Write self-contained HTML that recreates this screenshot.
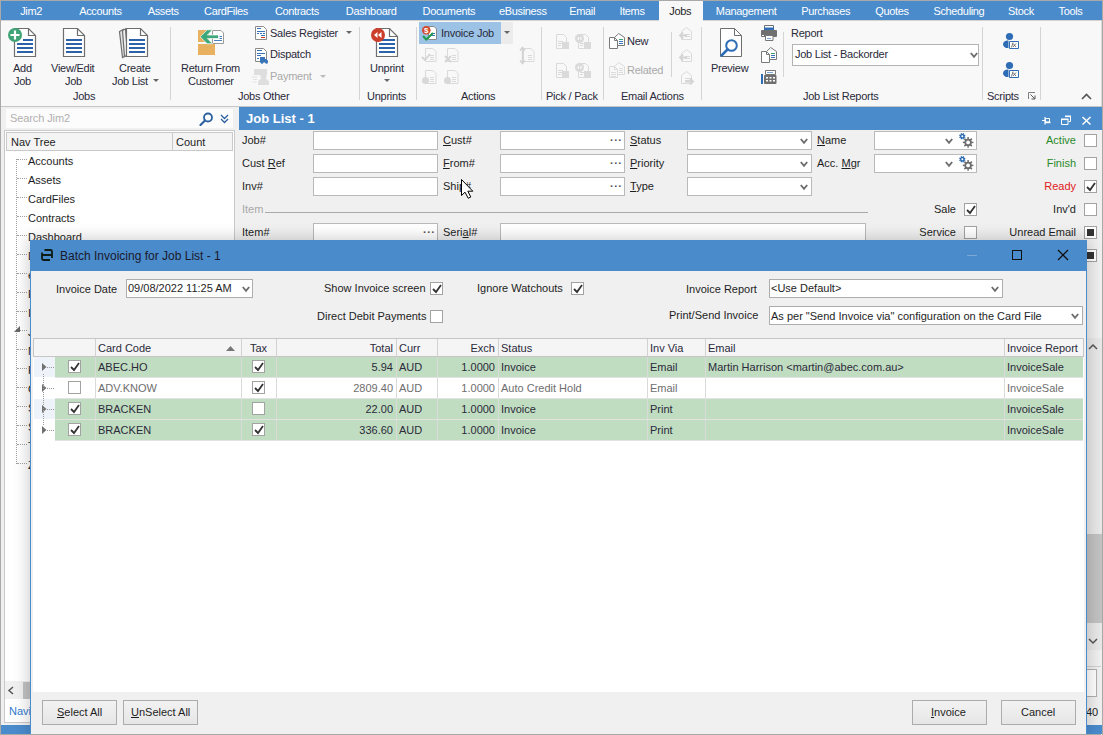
<!DOCTYPE html>
<html><head><meta charset="utf-8">
<style>
*{box-sizing:border-box;margin:0;padding:0}
html,body{width:1103px;height:735px;overflow:hidden;background:#f0f0f0}
body{position:relative;font-family:"Liberation Sans",sans-serif;font-size:11px;color:#1e1e1e}
.a{position:absolute}
.t{position:absolute;white-space:pre;line-height:13px;font-size:11px}
.tab{position:absolute;top:5px;width:80px;text-align:center;color:#fff;white-space:pre;line-height:13px;letter-spacing:-0.35px}
.r{letter-spacing:-0.25px;color:#2a2a3a}
.dis{color:#a9a9a9}
.sep{position:absolute;width:1px;background:#d4d4d4}
.inp{position:absolute;background:#fff;border:1px solid #b9b9b9}
.cb{position:absolute;width:13px;height:13px;background:#fff;border:1px solid #a2a2a2}
.chev{position:absolute;width:5px;height:5px;border-right:2px solid #6a6a6a;border-bottom:2px solid #6a6a6a;transform:translate(0.5px,0.5px) rotate(45deg)}
.dots{position:absolute;font-size:11px;letter-spacing:0px;color:#444;line-height:8px}
.btn{background:linear-gradient(#f2f2f2,#e6e6e6);border:1px solid #acacac}
u{text-decoration:underline;text-underline-offset:1px}
</style></head><body>
<!-- outer frame -->
<div class="a" style="left:0;top:0;width:1103px;height:1px;background:#a9a9a9"></div>
<div class="a" style="left:0;top:0;width:1px;height:735px;background:#a9a9a9"></div>
<div class="a" style="left:1102px;top:0;width:1px;height:735px;background:#a9a9a9"></div>
<!-- tab bar -->
<div class="a" style="left:1px;top:1px;width:1101px;height:19px;background:#4a8bcc"></div>
<div class="a" style="left:1px;top:20px;width:1101px;height:1px;background:#d6d2ce"></div>
<div class="a" style="left:659px;top:1px;width:44px;height:20px;background:#f8f8f8"></div>
<div class="tab" style="left:-8.9px">Jim2</div>
<div class="tab" style="left:60.4px">Accounts</div>
<div class="tab" style="left:123.2px">Assets</div>
<div class="tab" style="left:186.0px">CardFiles</div>
<div class="tab" style="left:256.9px">Contracts</div>
<div class="tab" style="left:331.2px">Dashboard</div>
<div class="tab" style="left:408.8px">Documents</div>
<div class="tab" style="left:482.8px">eBusiness</div>
<div class="tab" style="left:542.2px">Email</div>
<div class="tab" style="left:592.0px">Items</div>
<div class="tab" style="left:640.2px;color:#1e1e1e">Jobs</div>
<div class="tab" style="left:706.2px">Management</div>
<div class="tab" style="left:785.7px">Purchases</div>
<div class="tab" style="left:851.9px">Quotes</div>
<div class="tab" style="left:918.9px">Scheduling</div>
<div class="tab" style="left:981.0px">Stock</div>
<div class="tab" style="left:1030.5px">Tools</div>
<!-- ribbon -->
<div class="a" style="left:1px;top:21px;width:1100px;height:85px;background:#f8f8f8"></div>
<div class="a" style="left:1101px;top:21px;width:1px;height:85px;background:#d8d8d8"></div>
<div class="a" style="left:1px;top:106px;width:1101px;height:1px;background:#c6c6c6"></div>
<!-- Jobs group -->
<svg class="a" style="left:0;top:21px" width="170" height="45" viewBox="0 21 170 45">
 <g fill="#fff" stroke="#6e6e6e" stroke-width="1.2">
  <path d="M14.5 28.5h14l7 7v21h-21z"/>
  <path d="M63.5 28.5h14l7 7v21h-21z"/>
  <path d="M119.5 31.5l4-2 3 26-4 2z" fill="#e6e6e6"/>
  <path d="M122.5 30.5l3-1.5 2 26-3 1.5z" fill="#f2f2f2"/>
  <path d="M126.5 28.5h14l7 7v21h-21z"/>
 </g>
 <g fill="none" stroke="#6e6e6e" stroke-width="1.2"><path d="M28.5 28.5v7h7M77.5 28.5v7h7M140.5 28.5v7h7"/></g>
 <g fill="#2e62a8">
  <rect x="23" y="39" width="10" height="2"/><rect x="17" y="43" width="16" height="2"/><rect x="17" y="47" width="16" height="2"/><rect x="17" y="51" width="16" height="2"/>
  <rect x="66" y="39" width="16" height="2"/><rect x="66" y="43" width="16" height="2"/><rect x="66" y="47" width="16" height="2"/><rect x="66" y="51" width="16" height="2"/>
  <rect x="129" y="39" width="16" height="2"/><rect x="129" y="43" width="16" height="2"/><rect x="129" y="47" width="16" height="2"/><rect x="129" y="51" width="16" height="2"/>
 </g>
 <circle cx="15" cy="35" r="7" fill="#3fa377"/>
 <path d="M15 30.5v9M10.5 35h9" stroke="#fff" stroke-width="2.2"/>
</svg>
<div class="t r" style="left:13px;top:62px">Add</div>
<div class="t r" style="left:14px;top:75px">Job</div>
<div class="t r" style="left:51px;top:62px">View/Edit</div>
<div class="t r" style="left:65px;top:75px">Job</div>
<div class="t r" style="left:119px;top:62px">Create</div>
<div class="t r" style="left:112px;top:75px">Job List</div>
<svg class="a" style="left:153px;top:79px" width="7" height="4"><path d="M0 0h6l-3 3z" fill="#666"/></svg>
<div class="t r" style="left:73px;top:90px">Jobs</div>
<div class="sep" style="left:170px;top:27px;height:73px"></div>
<!-- Jobs Other -->
<svg class="a" style="left:196px;top:28px" width="30" height="30">
 <rect x="2" y="2" width="11" height="12" fill="#e8b15f"/>
 <rect x="2" y="16" width="17" height="11" fill="#e8b15f"/>
 <path d="M16.5 2.5h8.5l2.5 2.5v10.5h-11z" fill="#fff" stroke="#9a9a9a" stroke-width="1"/>
 <path d="M23.5 8.5h2.5M23.5 10.5h2.5M18 12.5h8" stroke="#4a7fc0"/>
 <path d="M4.2 8.8L11.2 1.8H16.6L11.4 7H22.5V10.6H11.4L16.6 15.8H11.2Z" fill="#3ea87b" stroke="#fff" stroke-width="0.7"/>
</svg>
<div class="t r" style="left:181px;top:62px">Return From</div>
<div class="t r" style="left:188px;top:75px">Customer</div>
<svg class="a" style="left:250px;top:22px" width="22" height="66" viewBox="250 22 22 66">
 <path d="M255.5 26.5h8l3 3v10h-11z" fill="#fff" stroke="#8a8a8a"/>
 <path d="M257 28.5h4M257 31.5h8M257 33.5h2M260 33.5h2M263 33.5h2M261 35.5h4" stroke="#3a74b8"/>
 <path d="M261 37.5h4" stroke="#d03a20"/>
 <path d="M255.5 48.5h8l3 3v10h-11z" fill="#fff" stroke="#8a8a8a"/>
 <path d="M257 50.5h5M257 53.5h8M257 55.5h4M257 58.5h2" stroke="#3a74b8"/>
 <path d="M260 57h5v2h1.5l1.5 2v1.5h-8z" fill="#3a74b8"/>
 <circle cx="262" cy="62.5" r="1.3" fill="#3a74b8"/><circle cx="266.5" cy="62.5" r="1.3" fill="#3a74b8"/>
 <g fill="#dedede"><rect x="254" y="69" width="13" height="6"/><circle cx="263.5" cy="76.5" r="3"/><path d="M258 85v-2.5a5.5 4 0 0 1 11 0v2.5z"/></g>
 <path d="M252 77h5M253 79.5h4M252.5 82h4" stroke="#e2e2e2"/>
</svg>
<div class="t r" style="left:270px;top:27px">Sales Register</div>
<svg class="a" style="left:346px;top:31px" width="7" height="4"><path d="M0 0h6l-3 3z" fill="#666"/></svg>
<div class="t r" style="left:270px;top:48px">Dispatch</div>
<div class="t r dis" style="left:270px;top:70px">Payment</div>
<svg class="a" style="left:320px;top:75px" width="7" height="4"><path d="M0 0h6l-3 3z" fill="#bbb"/></svg>
<div class="t r" style="left:238px;top:90px">Jobs Other</div>
<div class="sep" style="left:359px;top:27px;height:73px"></div>
<!-- Unprints -->
<svg class="a" style="left:368px;top:26px" width="32" height="32">
 <path d="M8.5 2.5h13l8 8v20h-21z" fill="#fff" stroke="#6e6e6e" stroke-width="1.2"/>
 <path d="M21.5 2.5v8h8" fill="none" stroke="#6e6e6e" stroke-width="1.2"/>
 <g fill="#2c64ac"><rect x="11" y="13" width="16" height="2"/><rect x="11" y="17" width="16" height="2"/><rect x="11" y="21" width="16" height="2"/><rect x="11" y="25" width="16" height="2"/></g>
 <circle cx="10" cy="9" r="7" fill="#cc3f2c"/>
 <path d="M6 9l3.5-3v6zM10 9l3.5-3v6z" fill="#fff"/>
</svg>
<div class="t r" style="left:370px;top:62px">Unprint</div>
<svg class="a" style="left:384px;top:79px" width="7" height="4"><path d="M0 0h6l-3 3z" fill="#666"/></svg>
<div class="t r" style="left:367px;top:90px">Unprints</div>
<div class="sep" style="left:416px;top:27px;height:73px"></div>
<!-- Actions -->
<div class="a" style="left:419px;top:22px;width:82px;height:22px;background:#9cc3e6"></div>
<div class="a" style="left:501px;top:22px;width:12px;height:22px;background:#ececec"></div>
<svg class="a" style="left:418px;top:22px" width="22" height="22" viewBox="418 22 22 22">
 <path d="M428.5 26.5h5.5l2.5 2.5v10.5h-8z" fill="#fff" stroke="#8a8a8a"/>
 <path d="M431 33.5h4M431 35.5h4" stroke="#3a74b8"/>
 <circle cx="426.3" cy="30.2" r="4.3" fill="#d4472a"/>
 <text x="426.3" y="33.3" font-size="8" font-weight="bold" fill="#fff" text-anchor="middle" font-family="Liberation Sans">$</text>
 <path d="M423 36l3.3 3.5 6.7-6.5" fill="none" stroke="#1e9a4a" stroke-width="2"/>
</svg>
<div class="t r" style="left:441px;top:27px">Invoice Job</div>
<svg class="a" style="left:504px;top:31px" width="7" height="4"><path d="M0 0h6l-3 3z" fill="#666"/></svg>
<svg class="a" style="left:418px;top:44px" width="120" height="44" viewBox="418 44 120 44"><path d="M425.5 48.5h7.5l3 3v10h-10.5z" fill="none" stroke="#dadada"/><path d="M430 55.5h4M430 57.5h4M430 59.5h4" stroke="#dadada"/><path d="M447.5 48.5h7.5l3 3v10h-10.5z" fill="none" stroke="#dadada"/><path d="M452 55.5h4M452 57.5h4M452 59.5h4" stroke="#dadada"/><path d="M523.5 48.5h7.5l3 3v10h-10.5z" fill="none" stroke="#dadada"/><path d="M528 55.5h4M528 57.5h4M528 59.5h4" stroke="#dadada"/><path d="M425.5 70.5h7.5l3 3v10h-10.5z" fill="none" stroke="#dadada"/><path d="M430 77.5h4M430 79.5h4M430 81.5h4" stroke="#dadada"/><path d="M447.5 70.5h7.5l3 3v10h-10.5z" fill="none" stroke="#dadada"/><path d="M452 77.5h4M452 79.5h4M452 81.5h4" stroke="#dadada"/><path d="M422 57l3 3 5-6" fill="none" stroke="#d4d4d4" stroke-width="1.8"/>
<path d="M445 56l6 6M451 56l-6 6" stroke="#d4d4d4" stroke-width="1.8"/>
<path d="M522.5 48v15M520 50.5l2.5-3 2.5 3M520 60.5l2.5 3 2.5-3" fill="none" stroke="#d4d4d4" stroke-width="1.5"/>
<circle cx="425.5" cy="80.5" r="3.5" fill="#d8d8d8"/><circle cx="447.5" cy="80.5" r="3.5" fill="#d8d8d8"/></svg>
<div class="t r" style="left:461px;top:90px">Actions</div>
<div class="sep" style="left:541px;top:27px;height:73px"></div>
<!-- Pick/Pack -->
<svg class="a" style="left:550px;top:30px" width="45" height="52" viewBox="550 30 45 52"><path d="M556.5 34.5h7l3 3v11h-10z" fill="none" stroke="#dadada"/><path d="M558 41.5h5M558 43.5h4M558 45.5h3" stroke="#dadada"/><rect x="562" y="42" width="7" height="7" fill="#dadada"/>
<path d="M578.5 34.5h7l3 3v11h-10z" fill="none" stroke="#dadada"/><path d="M580 43.5h4M580 45.5h3" stroke="#dadada"/><rect x="584" y="42" width="7" height="7" fill="#dadada"/>
<circle cx="579.5" cy="38.5" r="4.5" fill="#dadada"/><path d="M577 38.5l2-2v4zM579.5 38.5l2-2v4z" fill="#f8f8f8"/><path d="M556.5 63.5h7l3 3v11h-10z" fill="none" stroke="#dadada"/><path d="M558 70.5h5M558 72.5h4M558 74.5h3" stroke="#dadada"/><rect x="562" y="71" width="7" height="7" fill="#dadada"/>
<path d="M578.5 63.5h7l3 3v11h-10z" fill="none" stroke="#dadada"/><path d="M580 72.5h4M580 74.5h3" stroke="#dadada"/><rect x="584" y="71" width="7" height="7" fill="#dadada"/>
<circle cx="579.5" cy="67.5" r="4.5" fill="#dadada"/><path d="M577 67.5l2-2v4zM579.5 67.5l2-2v4z" fill="#f8f8f8"/></svg>
<div class="t r" style="left:546px;top:90px">Pick / Pack</div>
<div class="sep" style="left:603px;top:27px;height:73px"></div>
<!-- Email Actions -->
<svg class="a" style="left:606px;top:30px" width="22" height="52" viewBox="606 30 22 52"><path d="M614.5 37.5L618.7 33.5L624.5 37.5V45.5H614.5Z" fill="#fff" stroke="#7a7a7a"/><path d="M609.5 37.5H614.5L617.5 40.5V48.5H609.5Z" fill="#fff" stroke="#7a7a7a"/><path d="M614.5 37.5V40.5H617.5" fill="none" stroke="#7a7a7a"/><path d="M619 39.5h4" stroke="#3aa070"/><path d="M619 41.5h4M619 43.5h4" stroke="#3a74b8"/><path d="M614.5 66.5L618.7 62.5L624.5 66.5V74.5H614.5Z" fill="#f8f8f8" stroke="#dcdcdc"/><path d="M609.5 66.5H614.5L617.5 69.5V77.5H609.5Z" fill="#f8f8f8" stroke="#dcdcdc"/><path d="M614.5 66.5V69.5H617.5" fill="none" stroke="#dcdcdc"/><path d="M619 68.5h4M619 70.5h4M619 72.5h4M611 72.5h5M611 74.5h5M611 76.5h5" stroke="#dcdcdc"/></svg>
<div class="t r" style="left:627px;top:35px">New</div>
<div class="t r dis" style="left:627px;top:64px">Related</div>
<div class="sep" style="left:671px;top:32px;height:45px"></div>
<svg class="a" style="left:676px;top:24px" width="20" height="64" viewBox="676 24 20 64"><path d="M681.5 31.5l5-4 5 4v8h-10z" fill="#f8f8f8" stroke="#dadada"/><path d="M685 34.5h5M685 36.5h5" stroke="#dadada"/><path d="M680 35.5h7M683 32.5l-3 3 3 3" fill="none" stroke="#d4d4d4" stroke-width="1.8"/><path d="M681.5 53.5l5-4 5 4v8h-10z" fill="#f8f8f8" stroke="#dadada"/><path d="M685 56.5h5M685 58.5h5" stroke="#dadada"/><path d="M680 57.5h7M683 54.5l-3 3 3 3" fill="none" stroke="#d4d4d4" stroke-width="1.8"/><path d="M681.5 75.5l5-4 5 4v8h-10z" fill="#f8f8f8" stroke="#dadada"/><path d="M685 78.5h5M685 80.5h5" stroke="#dadada"/><path d="M685 81.5h8M690 78.5l3 3-3 3" fill="none" stroke="#d4d4d4" stroke-width="1.8"/></svg>
<div class="t r" style="left:621px;top:90px">Email Actions</div>
<div class="sep" style="left:701px;top:27px;height:73px"></div>
<!-- Job List Reports -->
<svg class="a" style="left:710px;top:24px" width="36" height="36" viewBox="710 24 36 36">
 <path d="M720.5 28.5H734.5L741.5 35.5V56.5H720.5Z" fill="#fff" stroke="#6e6e6e" stroke-width="1"/>
 <path d="M734.5 28.5V35.5H741.5" fill="none" stroke="#6e6e6e" stroke-width="1"/>
 <circle cx="731.5" cy="45.5" r="5.3" fill="#fff" stroke="#2e6db5" stroke-width="2"/>
 <path d="M727.5 49.5l-6 6" stroke="#2e6db5" stroke-width="2.6" stroke-linecap="round"/>
</svg>
<div class="t r" style="left:711px;top:62px">Preview</div>
<svg class="a" style="left:758px;top:22px" width="22" height="66" viewBox="758 22 22 66">
 <path d="M764.5 25.5h9v6h-9z" fill="#fff" stroke="#6e6e6e"/>
 <rect x="764" y="27.5" width="10" height="4" fill="#2e6db5"/>
 <rect x="761" y="30" width="16" height="7" rx="1" fill="#707070"/>
 <rect x="762" y="35" width="2" height="1" fill="#fff"/>
 <path d="M765.5 35.5h7.5v5h-7.5z" fill="#fff" stroke="#777"/>
 <path d="M767 38.5h4" stroke="#7aa3d6"/>
 <g transform="translate(152 14)"><path d="M614.5 37.5L618.7 33.5L624.5 37.5V45.5H614.5Z" fill="#fff" stroke="#7a7a7a"/><path d="M609.5 37.5H614.5L617.5 40.5V48.5H609.5Z" fill="#fff" stroke="#7a7a7a"/><path d="M614.5 37.5V40.5H617.5" fill="none" stroke="#7a7a7a"/><path d="M619 39.5h4" stroke="#3aa070"/><path d="M619 41.5h4M619 43.5h4" stroke="#3a74b8"/></g>
 <rect x="761" y="74" width="2" height="10" fill="#2e6db5"/>
 <path d="M765.5 70.5h10v4h-10z" fill="#fff" stroke="#777"/>
 <path d="M767 72.5h6" stroke="#7aa3d6"/>
 <rect x="764" y="75" width="12.5" height="9" rx="1" fill="#707070"/>
 <g fill="#fff"><rect x="766" y="77" width="2" height="1.5"/><rect x="769.5" y="77" width="2" height="1.5"/><rect x="773" y="77" width="2" height="1.5"/><rect x="766" y="80" width="2" height="1.5"/><rect x="769.5" y="80" width="2" height="1.5"/><rect x="773" y="80" width="2" height="1.5"/></g>
</svg>
<div class="sep" style="left:783px;top:32px;height:45px"></div>
<div class="t r" style="left:791px;top:27px">Report</div>
<div class="inp" style="left:792px;top:44px;width:187px;height:22px;border-color:#b4b4b4"></div>
<div class="t r" style="left:795px;top:48px">Job List - Backorder</div>

<svg class="a" style="left:970px;top:52px" width="8" height="7"><path d="M0.8 1L4 4.8L7.2 1" fill="none" stroke="#6e6e6e" stroke-width="1.9"/></svg>
<div class="t r" style="left:803px;top:90px">Job List Reports</div>
<div class="sep" style="left:982px;top:27px;height:73px"></div>
<!-- Scripts -->
<svg class="a" style="left:1000px;top:30px" width="22" height="52" viewBox="1000 30 22 52"><circle cx="1009.5" cy="36.5" r="3.6" fill="#2e6db5"/>
 <path d="M1008.5 40.5v7.5a4.5 4 0 0 1 -5.5 -3.75a4.5 4 0 0 1 5.5 -3.75z" fill="#2e6db5"/>
 <path d="M1009.5 41.5h9v7h-9z" fill="#fff" stroke="#2e6db5"/>
 <path d="M1011.5 47.5l1.5-5M1013 43.5l3 3.5M1016 43.5l-3 3.5" fill="none" stroke="#555" stroke-width="0.8"/><circle cx="1009.5" cy="65.5" r="3.6" fill="#2e6db5"/>
 <path d="M1008.5 69.5v7.5a4.5 4 0 0 1 -5.5 -3.75a4.5 4 0 0 1 5.5 -3.75z" fill="#2e6db5"/>
 <path d="M1009.5 70.5h9v7h-9z" fill="#fff" stroke="#2e6db5"/>
 <path d="M1011.5 76.5l1.5-5M1013 72.5l3 3.5M1016 72.5l-3 3.5" fill="none" stroke="#555" stroke-width="0.8"/></svg>
<div class="t r" style="left:987px;top:90px">Scripts</div>
<svg class="a" style="left:1027px;top:91px" width="10" height="10" viewBox="1027 91 10 10">
 <path d="M1028.5 99V92.5H1035" stroke="#808080" fill="none"/><path d="M1030.5 94.5l4 4M1035 95.5v3.5h-3.5" stroke="#555" fill="none"/>
</svg>
<div class="sep" style="left:1040px;top:27px;height:73px"></div>
<svg class="a" style="left:1081px;top:93px" width="11" height="7"><path d="M1 6l4.5-4.5 4.5 4.5" fill="none" stroke="#555" stroke-width="1.6"/></svg>
<!-- left nav panel -->
<div class="a" style="left:6px;top:109px;width:227px;height:19px;background:#fcfcfc"></div>
<div class="t" style="left:10px;top:112px;color:#b0b0b0;letter-spacing:-0.1px">Search Jim2</div>
<svg class="a" style="left:199px;top:112px" width="15" height="14">
 <circle cx="9" cy="5.5" r="4" fill="none" stroke="#2a5fa0" stroke-width="1.8"/>
 <path d="M6 8.5l-4.5 4.5" stroke="#2a5fa0" stroke-width="2.2" stroke-linecap="round"/>
</svg>
<svg class="a" style="left:220px;top:114px" width="9" height="10"><path d="M1 1l3.5 3.5 3.5-3.5M1 5l3.5 3.5 3.5-3.5" fill="none" stroke="#2a5fa0" stroke-width="1.3"/></svg>
<div class="a" style="left:4px;top:130px;width:231px;height:593px;background:#fff;border:1px solid #c9c9c9"></div>
<div class="a" style="left:6px;top:132px;width:227px;height:19px;background:#f4f4f4;border:1px solid #c9c9c9"></div>
<div class="a" style="left:172px;top:133px;width:1px;height:17px;background:#c9c9c9"></div>
<div class="t" style="left:11px;top:136px">Nav Tree</div>
<div class="t" style="left:176px;top:136px">Count</div>
<div class="a" style="left:16px;top:159px;width:1px;height:305px;border-left:1px dotted #a0a0a0"></div>
<div class="a" style="left:17px;top:159px;width:10px;height:1px;border-top:1px dotted #a0a0a0"></div>
<div class="t" style="left:28px;top:155px">Accounts</div>
<div class="a" style="left:17px;top:178px;width:10px;height:1px;border-top:1px dotted #a0a0a0"></div>
<div class="t" style="left:28px;top:174px">Assets</div>
<div class="a" style="left:17px;top:197px;width:10px;height:1px;border-top:1px dotted #a0a0a0"></div>
<div class="t" style="left:28px;top:193px">CardFiles</div>
<div class="a" style="left:17px;top:216px;width:10px;height:1px;border-top:1px dotted #a0a0a0"></div>
<div class="t" style="left:28px;top:212px">Contracts</div>
<div class="a" style="left:17px;top:235px;width:10px;height:1px;border-top:1px dotted #a0a0a0"></div>
<div class="t" style="left:28px;top:231px">Dashboard</div>
<div class="a" style="left:17px;top:254px;width:10px;height:1px;border-top:1px dotted #a0a0a0"></div>
<div class="t" style="left:28px;top:250px">Documents</div>
<div class="a" style="left:17px;top:273px;width:10px;height:1px;border-top:1px dotted #a0a0a0"></div>
<div class="t" style="left:28px;top:269px">eBusiness</div>
<div class="a" style="left:17px;top:292px;width:10px;height:1px;border-top:1px dotted #a0a0a0"></div>
<div class="t" style="left:28px;top:288px">Email</div>
<div class="a" style="left:17px;top:311px;width:10px;height:1px;border-top:1px dotted #a0a0a0"></div>
<div class="t" style="left:28px;top:307px">Items</div>
<div class="a" style="left:17px;top:330px;width:10px;height:1px;border-top:1px dotted #a0a0a0"></div>
<div class="t" style="left:28px;top:326px">Jobs</div>
<div class="a" style="left:17px;top:349px;width:10px;height:1px;border-top:1px dotted #a0a0a0"></div>
<div class="t" style="left:28px;top:345px">Management</div>
<div class="a" style="left:17px;top:368px;width:10px;height:1px;border-top:1px dotted #a0a0a0"></div>
<div class="t" style="left:28px;top:364px">Purchases</div>
<div class="a" style="left:17px;top:387px;width:10px;height:1px;border-top:1px dotted #a0a0a0"></div>
<div class="t" style="left:28px;top:383px">Quotes</div>
<div class="a" style="left:17px;top:406px;width:10px;height:1px;border-top:1px dotted #a0a0a0"></div>
<div class="t" style="left:28px;top:402px">Scheduling</div>
<div class="a" style="left:17px;top:425px;width:10px;height:1px;border-top:1px dotted #a0a0a0"></div>
<div class="t" style="left:28px;top:421px">Stock</div>
<div class="a" style="left:17px;top:444px;width:10px;height:1px;border-top:1px dotted #a0a0a0"></div>
<div class="t" style="left:28px;top:440px">Tools</div>
<div class="a" style="left:17px;top:463px;width:10px;height:1px;border-top:1px dotted #a0a0a0"></div>
<div class="t" style="left:28px;top:459px">Zzz</div>
<svg class="a" style="left:14px;top:326px" width="7" height="7"><path d="M6 0v6h-6z" fill="#666"/></svg>
<div class="a" style="left:5px;top:681px;width:229px;height:18px;background:#f0f0f0"></div>
<svg class="a" style="left:7px;top:686px" width="8" height="9"><path d="M6 1l-4 3.5 4 3.5" fill="none" stroke="#555" stroke-width="1.5"/></svg>
<div class="a" style="left:23px;top:682px;width:100px;height:17px;background:#c2c2c2"></div>
<div class="t" style="left:9px;top:705px;color:#2f7ad0">Navigator</div>
<div class="a" style="left:1px;top:725px;width:236px;height:10px;background:#4a8bcc"></div>

<!-- job list panel -->
<div class="a" style="left:239px;top:107px;width:863px;height:23px;background:#4a8bcc"></div>
<div class="t" style="left:246px;top:111px;font-size:13px;line-height:15px;font-weight:bold;color:#fff">Job List - 1</div>
<svg class="a" style="left:1038px;top:112px" width="56" height="16" viewBox="1038 112 56 16">
 <path d="M1042 120.5h3M1045 117v7.5" stroke="#fff" stroke-width="1.2"/>
 <path d="M1045.5 118.5h4v3.5h-4z" fill="none" stroke="#fff" stroke-width="1"/><path d="M1045 122.5h5.5" stroke="#fff" stroke-width="1.4"/>
 <path d="M1065.5 116.5h5v5h-2" fill="none" stroke="#fff" stroke-width="1"/><path d="M1065 116.3h6" stroke="#fff" stroke-width="1.6"/>
 <path d="M1061.5 119.5h6.5v5h-6.5z" fill="none" stroke="#fff" stroke-width="1"/><path d="M1061 119.3h7.5" stroke="#fff" stroke-width="1.6"/>
 <path d="M1082.5 117l8 7.5M1090.5 117l-8 7.5" stroke="#fff" stroke-width="1.5"/>
</svg>
<div class="t" style="left:242px;top:134px">Job#</div>
<div class="t" style="left:242px;top:157px">Cust <u>R</u>ef</div>
<div class="t" style="left:242px;top:180px">Inv#</div>
<div class="t" style="left:242px;top:203px;color:#a8a8a8">Item</div>
<div class="a" style="left:265px;top:212px;width:603px;height:1px;background:#a9a9a9"></div>
<div class="t" style="left:242px;top:226px">Item#</div>
<div class="inp" style="left:313px;top:131px;width:125px;height:19px"></div>
<div class="inp" style="left:313px;top:154px;width:125px;height:19px"></div>
<div class="inp" style="left:313px;top:177px;width:125px;height:19px"></div>
<div class="inp" style="left:313px;top:223px;width:125px;height:19px"></div>
<div class="t" style="left:443px;top:134px"><u>C</u>ust#</div>
<div class="t" style="left:443px;top:157px"><u>F</u>rom#</div>
<div class="t" style="left:443px;top:180px">Ship#</div>
<div class="t" style="left:443px;top:226px">Seri<u>a</u>l#</div>
<div class="inp" style="left:500px;top:131px;width:125px;height:19px"></div>
<div class="inp" style="left:500px;top:154px;width:125px;height:19px"></div>
<div class="inp" style="left:500px;top:177px;width:125px;height:19px"></div>
<div class="inp" style="left:500px;top:223px;width:366px;height:19px"></div>
<div class="t" style="left:610px;top:134px;letter-spacing:0.5px;font-weight:bold;color:#555">···</div>
<div class="t" style="left:610px;top:157px;letter-spacing:0.5px;font-weight:bold;color:#555">···</div>
<div class="t" style="left:610px;top:180px;letter-spacing:0.5px;font-weight:bold;color:#555">···</div>
<div class="t" style="left:423px;top:226px;letter-spacing:0.5px;font-weight:bold;color:#555">···</div>
<div class="t" style="left:630px;top:134px"><u>S</u>tatus</div>
<div class="t" style="left:630px;top:157px"><u>P</u>riority</div>
<div class="t" style="left:630px;top:180px"><u>T</u>ype</div>
<div class="inp" style="left:687px;top:131px;width:125px;height:19px"></div>
<div class="inp" style="left:687px;top:154px;width:125px;height:19px"></div>
<div class="inp" style="left:687px;top:177px;width:125px;height:19px"></div>



<svg class="a" style="left:800px;top:138px" width="8" height="7"><path d="M0.8 1L4 4.8L7.2 1" fill="none" stroke="#6e6e6e" stroke-width="1.9"/></svg><svg class="a" style="left:800px;top:161px" width="8" height="7"><path d="M0.8 1L4 4.8L7.2 1" fill="none" stroke="#6e6e6e" stroke-width="1.9"/></svg><svg class="a" style="left:800px;top:184px" width="8" height="7"><path d="M0.8 1L4 4.8L7.2 1" fill="none" stroke="#6e6e6e" stroke-width="1.9"/></svg>
<div class="t" style="left:817px;top:134px"><u>N</u>ame</div>
<div class="t" style="left:817px;top:157px">Acc. <u>M</u>gr</div>
<div class="inp" style="left:874px;top:131px;width:103px;height:19px"></div>
<div class="inp" style="left:874px;top:154px;width:103px;height:19px"></div>
<svg class="a" style="left:945px;top:138px" width="8" height="7"><path d="M0.8 1L4 4.8L7.2 1" fill="none" stroke="#6e6e6e" stroke-width="1.9"/></svg><svg class="a" style="left:945px;top:161px" width="8" height="7"><path d="M0.8 1L4 4.8L7.2 1" fill="none" stroke="#6e6e6e" stroke-width="1.9"/></svg>


<svg class="a" style="left:956px;top:130px" width="20" height="42" viewBox="956 130 20 42"><path d="M962.80 142.40L973.40 142.40" stroke="#6e6e6e" stroke-width="1.5"/><path d="M964.35 138.65L971.85 146.15" stroke="#6e6e6e" stroke-width="1.5"/><path d="M968.10 137.10L968.10 147.70" stroke="#6e6e6e" stroke-width="1.5"/><path d="M971.85 138.65L964.35 146.15" stroke="#6e6e6e" stroke-width="1.5"/><circle cx="968.1" cy="142.4" r="3.7" fill="#6e6e6e"/><circle cx="968.1" cy="142.4" r="1.9" fill="#fff"/><path d="M959.34 135.08L965.26 137.52" stroke="#2e6db5" stroke-width="1.3"/><path d="M961.08 133.34L963.52 139.26" stroke="#2e6db5" stroke-width="1.3"/><path d="M963.52 133.34L961.08 139.26" stroke="#2e6db5" stroke-width="1.3"/><path d="M965.26 135.08L959.34 137.52" stroke="#2e6db5" stroke-width="1.3"/><circle cx="962.3" cy="136.3" r="2.3" fill="#2e6db5"/><circle cx="962.3" cy="136.3" r="1.0" fill="#fff"/><path d="M962.80 165.40L973.40 165.40" stroke="#6e6e6e" stroke-width="1.5"/><path d="M964.35 161.65L971.85 169.15" stroke="#6e6e6e" stroke-width="1.5"/><path d="M968.10 160.10L968.10 170.70" stroke="#6e6e6e" stroke-width="1.5"/><path d="M971.85 161.65L964.35 169.15" stroke="#6e6e6e" stroke-width="1.5"/><circle cx="968.1" cy="165.4" r="3.7" fill="#6e6e6e"/><circle cx="968.1" cy="165.4" r="1.9" fill="#fff"/><path d="M959.34 158.08L965.26 160.52" stroke="#2e6db5" stroke-width="1.3"/><path d="M961.08 156.34L963.52 162.26" stroke="#2e6db5" stroke-width="1.3"/><path d="M963.52 156.34L961.08 162.26" stroke="#2e6db5" stroke-width="1.3"/><path d="M965.26 158.08L959.34 160.52" stroke="#2e6db5" stroke-width="1.3"/><circle cx="962.3" cy="159.3" r="2.3" fill="#2e6db5"/><circle cx="962.3" cy="159.3" r="1.0" fill="#fff"/></svg>
<div class="t" style="left:976px;width:100px;text-align:right;top:134px;color:#2a8a2a">Active</div>
<div class="t" style="left:976px;width:100px;text-align:right;top:157px;color:#2a8a2a">Finish</div>
<div class="t" style="left:976px;width:100px;text-align:right;top:180px;color:#e02020">Ready</div>
<div class="t" style="left:976px;width:100px;text-align:right;top:203px">Inv'd</div>
<div class="t" style="left:976px;width:100px;text-align:right;top:226px">Unread Email</div>
<div class="cb" style="left:1084px;top:134px"></div>
<div class="cb" style="left:1084px;top:157px"></div>
<div class="cb" style="left:1084px;top:180px"></div>
<svg class="a" style="left:1086px;top:182px" width="10" height="10"><path d="M1 5l3 3 5-7" fill="none" stroke="#333" stroke-width="1.8"/></svg>
<div class="cb" style="left:1084px;top:203px"></div>
<div class="cb" style="left:1084px;top:226px"></div>
<div class="a" style="left:1087px;top:229px;width:7px;height:7px;background:#333"></div>
<div class="cb" style="left:1084px;top:249px"></div>
<div class="a" style="left:1087px;top:252px;width:7px;height:7px;background:#333"></div>
<div class="t" style="left:856px;width:100px;text-align:right;top:203px">Sale</div>
<div class="t" style="left:856px;width:100px;text-align:right;top:226px">Service</div>
<div class="cb" style="left:964px;top:203px"></div>
<svg class="a" style="left:966px;top:205px" width="10" height="10"><path d="M1 5l3 3 5-7" fill="none" stroke="#333" stroke-width="1.8"/></svg>
<div class="cb" style="left:964px;top:226px"></div>

<!-- cursor -->
<svg class="a" style="left:455px;top:174px" width="24" height="28" viewBox="455 174 24 28">
 <path d="M461.5 179.5V195.5L465 192.2L468.2 198.2L470.8 197L467.8 191.2H472.8Z" fill="#fff" stroke="#000" stroke-width="1" stroke-linejoin="round"/>
</svg>
<!-- right side behind dialog -->
<div class="a" style="left:1087px;top:338px;width:15px;height:312px;background:#e8e8e8"></div>
<div class="a" style="left:1087px;top:534px;width:15px;height:89px;background:#c2c2c2"></div>
<svg class="a" style="left:1088px;top:343px" width="10" height="8"><path d="M1 6l4-4 4 4" fill="none" stroke="#555" stroke-width="1.5"/></svg>
<svg class="a" style="left:1088px;top:637px" width="10" height="8"><path d="M1 2l4 4 4-4" fill="none" stroke="#555" stroke-width="1.5"/></svg>
<div class="a" style="left:1087px;top:666px;width:14px;height:1px;background:#d0d0d0"></div>
<div class="a" style="left:1087px;top:669px;width:10px;height:28px;border:1px solid #b0b0b0;border-left:none;background:#fff"></div>
<div class="t" style="left:1086px;top:706px">40</div>
<div class="a" style="left:1087px;top:725px;width:15px;height:9px;background:#4a8bcc"></div>

<!-- dialog -->
<div class="a" style="left:30px;top:240px;width:1057px;height:494px;background:#4a8bcc;box-shadow:0 0 14px 2px rgba(0,0,0,0.19)"></div>
<div class="a" style="left:31px;top:271px;width:1055px;height:463px;background:#f0f0f0"></div>
<svg class="a" style="left:40px;top:248px" width="14" height="14">
 <path d="M4.5 2H10.5Q12 2 12 3.5V10M2 7H12M2 4.5V10.5Q2 12 3.5 12H10" fill="none" stroke="#0e1a14" stroke-width="1.8"/>
</svg>
<div class="t" style="left:60px;top:249px;font-size:12px;line-height:15px;color:#1a1a2a">Batch Invoicing for Job List - 1</div>
<div class="a" style="left:967px;top:255px;width:10px;height:1px;background:#7ea7d2"></div>
<div class="a" style="left:1012px;top:250px;width:10px;height:10px;border:1.5px solid #111"></div>
<svg class="a" style="left:1057px;top:249px" width="12" height="12"><path d="M1 1l10 10M11 1l-10 10" stroke="#111" stroke-width="1.3"/></svg>
<!-- options -->
<div class="t" style="left:56px;top:283px">Invoice Date</div>
<div class="inp" style="left:126px;top:279px;width:127px;height:19px;border-color:#adadad"></div>
<div class="t" style="left:128px;top:282px">09/08/2022 11:25 AM</div>

<div class="t" style="left:324px;top:282px">Show Invoice screen</div>
<div class="cb" style="left:430px;top:282px"></div>
<svg class="a" style="left:432px;top:284px" width="10" height="10"><path d="M1 5l3 3 5-7" fill="none" stroke="#333" stroke-width="1.8"/></svg>
<div class="t" style="left:317px;top:310px">Direct Debit Payments</div>
<div class="cb" style="left:430px;top:310px"></div>
<div class="t" style="left:477px;top:282px">Ignore Watchouts</div>
<div class="cb" style="left:571px;top:282px"></div>
<svg class="a" style="left:573px;top:284px" width="10" height="10"><path d="M1 5l3 3 5-7" fill="none" stroke="#333" stroke-width="1.8"/></svg>
<div class="t" style="left:686px;top:283px">Invoice Report</div>
<div class="t" style="left:669px;top:309px">Print/Send Invoice</div>
<div class="inp" style="left:769px;top:279px;width:234px;height:19px;border-color:#adadad"></div>
<div class="t" style="left:771px;top:282px">&lt;Use Default&gt;</div>

<div class="inp" style="left:769px;top:306px;width:314px;height:19px;border-color:#adadad"></div>
<div class="t" style="left:771px;top:310px">As per "Send Invoice via" configuration on the Card File</div>

<svg class="a" style="left:242px;top:286px" width="8" height="7"><path d="M0.8 1L4 4.8L7.2 1" fill="none" stroke="#6e6e6e" stroke-width="1.9"/></svg><svg class="a" style="left:991px;top:286px" width="8" height="7"><path d="M0.8 1L4 4.8L7.2 1" fill="none" stroke="#6e6e6e" stroke-width="1.9"/></svg><svg class="a" style="left:1071px;top:313px" width="8" height="7"><path d="M0.8 1L4 4.8L7.2 1" fill="none" stroke="#6e6e6e" stroke-width="1.9"/></svg>
<!-- grid -->
<div class="a" style="left:33px;top:338px;width:1051px;height:354px;background:#fff"></div>
<div class="a" style="left:33px;top:338px;width:1051px;height:19px;background:#f5f5f5;border:1px solid #c6c6c6"></div>
<div class="a" style="left:95px;top:339px;width:1px;height:17px;background:#d2d2d2"></div>
<div class="a" style="left:241px;top:339px;width:1px;height:17px;background:#d2d2d2"></div>
<div class="a" style="left:276px;top:339px;width:1px;height:17px;background:#d2d2d2"></div>
<div class="a" style="left:396px;top:339px;width:1px;height:17px;background:#d2d2d2"></div>
<div class="a" style="left:437px;top:339px;width:1px;height:17px;background:#d2d2d2"></div>
<div class="a" style="left:498px;top:339px;width:1px;height:17px;background:#d2d2d2"></div>
<div class="a" style="left:647px;top:339px;width:1px;height:17px;background:#d2d2d2"></div>
<div class="a" style="left:705px;top:339px;width:1px;height:17px;background:#d2d2d2"></div>
<div class="a" style="left:1004px;top:339px;width:1px;height:17px;background:#d2d2d2"></div>
<div class="t" style="left:98px;top:342px;color:#2a2a3a">Card Code</div>
<div class="t" style="left:241px;width:35px;text-align:center;top:342px;color:#2a2a3a">Tax</div>
<div class="t" style="left:276px;width:117px;text-align:right;top:342px;color:#2a2a3a">Total</div>
<div class="t" style="left:399px;top:342px;color:#2a2a3a">Curr</div>
<div class="t" style="left:437px;width:58px;text-align:right;top:342px;color:#2a2a3a">Exch</div>
<div class="t" style="left:501px;top:342px;color:#2a2a3a">Status</div>
<div class="t" style="left:650px;top:342px;color:#2a2a3a">Inv Via</div>
<div class="t" style="left:708px;top:342px;color:#2a2a3a">Email</div>
<div class="t" style="left:1007px;top:342px;color:#2a2a3a">Invoice Report</div>
<svg class="a" style="left:226px;top:346px" width="9" height="5"><path d="M0 5h9l-4.5-5z" fill="#777"/></svg>
<div class="a" style="left:34px;top:357px;width:21px;height:20px;background:#eef3fa"></div>
<div class="a" style="left:55px;top:357px;width:1028px;height:20px;background:#c1ddc1"></div>
<div class="a" style="left:95px;top:357px;width:1px;height:21px;background:#dadada"></div>
<div class="a" style="left:241px;top:357px;width:1px;height:21px;background:#dadada"></div>
<div class="a" style="left:276px;top:357px;width:1px;height:21px;background:#dadada"></div>
<div class="a" style="left:396px;top:357px;width:1px;height:21px;background:#dadada"></div>
<div class="a" style="left:437px;top:357px;width:1px;height:21px;background:#dadada"></div>
<div class="a" style="left:498px;top:357px;width:1px;height:21px;background:#dadada"></div>
<div class="a" style="left:647px;top:357px;width:1px;height:21px;background:#dadada"></div>
<div class="a" style="left:705px;top:357px;width:1px;height:21px;background:#dadada"></div>
<div class="a" style="left:1004px;top:357px;width:1px;height:21px;background:#dadada"></div>
<div class="a" style="left:55px;top:377px;width:1028px;height:1px;background:#e2e2e2"></div>
<svg class="a" style="left:41px;top:362px" width="13" height="10"><path d="M1 1l4.5 4-4.5 4z" fill="#707070"/><path d="M6 5.5h7" stroke="#999" stroke-dasharray="1 1"/></svg>
<div class="cb" style="left:68px;top:360px"></div>
<svg class="a" style="left:70px;top:362px" width="10" height="10"><path d="M1 5l3 3 5-7" fill="none" stroke="#333" stroke-width="1.8"/></svg>
<div class="t" style="left:98px;top:361px;color:#2a2a3a">ABEC.HO</div>
<div class="cb" style="left:252px;top:360px"></div>
<svg class="a" style="left:254px;top:362px" width="10" height="10"><path d="M1 5l3 3 5-7" fill="none" stroke="#333" stroke-width="1.8"/></svg>
<div class="t" style="left:276px;width:117px;text-align:right;top:361px;color:#2a2a3a">5.94</div>
<div class="t" style="left:399px;top:361px;color:#2a2a3a">AUD</div>
<div class="t" style="left:437px;width:58px;text-align:right;top:361px;color:#2a2a3a">1.0000</div>
<div class="t" style="left:501px;top:361px;color:#2a2a3a">Invoice</div>
<div class="t" style="left:650px;top:361px;color:#2a2a3a">Email</div>
<div class="t" style="left:708px;top:361px;color:#2a2a3a">Martin Harrison &lt;martin@abec.com.au&gt;</div>
<div class="t" style="left:1007px;top:361px;color:#2a2a3a">InvoiceSale</div>
<div class="a" style="left:34px;top:378px;width:21px;height:20px;background:#fff"></div>
<div class="a" style="left:95px;top:378px;width:1px;height:21px;background:#dadada"></div>
<div class="a" style="left:241px;top:378px;width:1px;height:21px;background:#dadada"></div>
<div class="a" style="left:276px;top:378px;width:1px;height:21px;background:#dadada"></div>
<div class="a" style="left:396px;top:378px;width:1px;height:21px;background:#dadada"></div>
<div class="a" style="left:437px;top:378px;width:1px;height:21px;background:#dadada"></div>
<div class="a" style="left:498px;top:378px;width:1px;height:21px;background:#dadada"></div>
<div class="a" style="left:647px;top:378px;width:1px;height:21px;background:#dadada"></div>
<div class="a" style="left:705px;top:378px;width:1px;height:21px;background:#dadada"></div>
<div class="a" style="left:1004px;top:378px;width:1px;height:21px;background:#dadada"></div>
<div class="a" style="left:55px;top:398px;width:1028px;height:1px;background:#e2e2e2"></div>
<svg class="a" style="left:41px;top:383px" width="13" height="10"><path d="M1 1l4.5 4-4.5 4z" fill="#707070"/><path d="M6 5.5h7" stroke="#999" stroke-dasharray="1 1"/></svg>
<div class="cb" style="left:68px;top:381px"></div>
<div class="t" style="left:98px;top:382px;color:#6e6e6e">ADV.KNOW</div>
<div class="cb" style="left:252px;top:381px"></div>
<svg class="a" style="left:254px;top:383px" width="10" height="10"><path d="M1 5l3 3 5-7" fill="none" stroke="#333" stroke-width="1.8"/></svg>
<div class="t" style="left:276px;width:117px;text-align:right;top:382px;color:#6e6e6e">2809.40</div>
<div class="t" style="left:399px;top:382px;color:#6e6e6e">AUD</div>
<div class="t" style="left:437px;width:58px;text-align:right;top:382px;color:#6e6e6e">1.0000</div>
<div class="t" style="left:501px;top:382px;color:#6e6e6e">Auto Credit Hold</div>
<div class="t" style="left:650px;top:382px;color:#6e6e6e">Email</div>
<div class="t" style="left:1007px;top:382px;color:#6e6e6e">InvoiceSale</div>
<div class="a" style="left:34px;top:399px;width:21px;height:20px;background:#eef3fa"></div>
<div class="a" style="left:55px;top:399px;width:1028px;height:20px;background:#c1ddc1"></div>
<div class="a" style="left:95px;top:399px;width:1px;height:21px;background:#dadada"></div>
<div class="a" style="left:241px;top:399px;width:1px;height:21px;background:#dadada"></div>
<div class="a" style="left:276px;top:399px;width:1px;height:21px;background:#dadada"></div>
<div class="a" style="left:396px;top:399px;width:1px;height:21px;background:#dadada"></div>
<div class="a" style="left:437px;top:399px;width:1px;height:21px;background:#dadada"></div>
<div class="a" style="left:498px;top:399px;width:1px;height:21px;background:#dadada"></div>
<div class="a" style="left:647px;top:399px;width:1px;height:21px;background:#dadada"></div>
<div class="a" style="left:705px;top:399px;width:1px;height:21px;background:#dadada"></div>
<div class="a" style="left:1004px;top:399px;width:1px;height:21px;background:#dadada"></div>
<div class="a" style="left:55px;top:419px;width:1028px;height:1px;background:#e2e2e2"></div>
<svg class="a" style="left:41px;top:404px" width="13" height="10"><path d="M1 1l4.5 4-4.5 4z" fill="#707070"/><path d="M6 5.5h7" stroke="#999" stroke-dasharray="1 1"/></svg>
<div class="cb" style="left:68px;top:402px"></div>
<svg class="a" style="left:70px;top:404px" width="10" height="10"><path d="M1 5l3 3 5-7" fill="none" stroke="#333" stroke-width="1.8"/></svg>
<div class="t" style="left:98px;top:403px;color:#2a2a3a">BRACKEN</div>
<div class="cb" style="left:252px;top:402px"></div>
<div class="t" style="left:276px;width:117px;text-align:right;top:403px;color:#2a2a3a">22.00</div>
<div class="t" style="left:399px;top:403px;color:#2a2a3a">AUD</div>
<div class="t" style="left:437px;width:58px;text-align:right;top:403px;color:#2a2a3a">1.0000</div>
<div class="t" style="left:501px;top:403px;color:#2a2a3a">Invoice</div>
<div class="t" style="left:650px;top:403px;color:#2a2a3a">Print</div>
<div class="t" style="left:1007px;top:403px;color:#2a2a3a">InvoiceSale</div>
<div class="a" style="left:34px;top:420px;width:21px;height:20px;background:#fff"></div>
<div class="a" style="left:55px;top:420px;width:1028px;height:20px;background:#c1ddc1"></div>
<div class="a" style="left:95px;top:420px;width:1px;height:21px;background:#dadada"></div>
<div class="a" style="left:241px;top:420px;width:1px;height:21px;background:#dadada"></div>
<div class="a" style="left:276px;top:420px;width:1px;height:21px;background:#dadada"></div>
<div class="a" style="left:396px;top:420px;width:1px;height:21px;background:#dadada"></div>
<div class="a" style="left:437px;top:420px;width:1px;height:21px;background:#dadada"></div>
<div class="a" style="left:498px;top:420px;width:1px;height:21px;background:#dadada"></div>
<div class="a" style="left:647px;top:420px;width:1px;height:21px;background:#dadada"></div>
<div class="a" style="left:705px;top:420px;width:1px;height:21px;background:#dadada"></div>
<div class="a" style="left:1004px;top:420px;width:1px;height:21px;background:#dadada"></div>
<div class="a" style="left:55px;top:440px;width:1028px;height:1px;background:#e2e2e2"></div>
<svg class="a" style="left:41px;top:425px" width="13" height="10"><path d="M1 1l4.5 4-4.5 4z" fill="#707070"/><path d="M6 5.5h7" stroke="#999" stroke-dasharray="1 1"/></svg>
<div class="cb" style="left:68px;top:423px"></div>
<svg class="a" style="left:70px;top:425px" width="10" height="10"><path d="M1 5l3 3 5-7" fill="none" stroke="#333" stroke-width="1.8"/></svg>
<div class="t" style="left:98px;top:424px;color:#2a2a3a">BRACKEN</div>
<div class="cb" style="left:252px;top:423px"></div>
<svg class="a" style="left:254px;top:425px" width="10" height="10"><path d="M1 5l3 3 5-7" fill="none" stroke="#333" stroke-width="1.8"/></svg>
<div class="t" style="left:276px;width:117px;text-align:right;top:424px;color:#2a2a3a">336.60</div>
<div class="t" style="left:399px;top:424px;color:#2a2a3a">AUD</div>
<div class="t" style="left:437px;width:58px;text-align:right;top:424px;color:#2a2a3a">1.0000</div>
<div class="t" style="left:501px;top:424px;color:#2a2a3a">Invoice</div>
<div class="t" style="left:650px;top:424px;color:#2a2a3a">Print</div>
<div class="t" style="left:1007px;top:424px;color:#2a2a3a">InvoiceSale</div>
<div class="a" style="left:43px;top:374px;width:1px;height:51px;border-left:1px dotted #999"></div>
<!-- buttons -->
<div class="a btn" style="left:42px;top:700px;width:75px;height:25px"></div>
<div class="t" style="left:57px;top:706px"><u>S</u>elect All</div>
<div class="a btn" style="left:123px;top:700px;width:75px;height:25px"></div>
<div class="t" style="left:131px;top:706px"><u>U</u>nSelect All</div>
<div class="a btn" style="left:912px;top:700px;width:75px;height:25px"></div>
<div class="t" style="left:931px;top:706px"><u>I</u>nvoice</div>
<div class="a btn" style="left:1001px;top:700px;width:75px;height:25px"></div>
<div class="t" style="left:1021px;top:706px">Cancel</div>
<div class="a" style="left:1px;top:734px;width:1100px;height:1px;background:#a9a9a9"></div>
</body></html>
